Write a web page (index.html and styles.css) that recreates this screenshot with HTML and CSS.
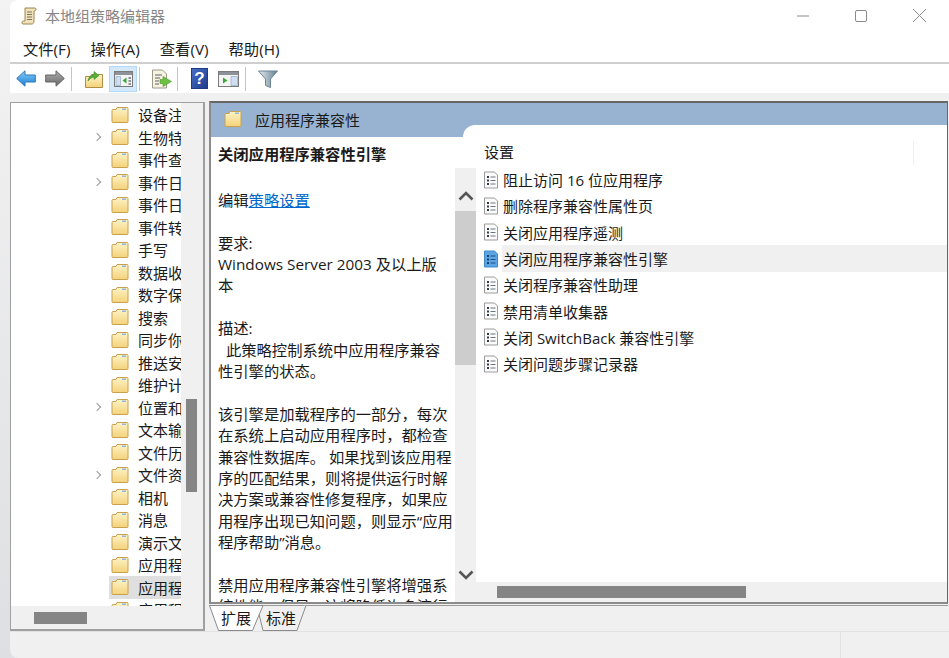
FILE: index.html
```html
<!DOCTYPE html>
<html lang="zh-CN">
<head>
  <meta charset="UTF-8" />
  <title>本地组策略编辑器</title>
  <link rel="stylesheet" href="styles.css">
</head>
<body>
  <svg class="defs" width="0" height="0">
    <defs>
      <linearGradient id="fold" x1="0" y1="0" x2="0" y2="1">
        <stop offset="0" stop-color="#fdf4c8"/>
        <stop offset="1" stop-color="#f4d27a"/>
      </linearGradient>
      <linearGradient id="blue" x1="0" y1="0" x2="0" y2="1">
        <stop offset="0" stop-color="#86d0fa"/>
        <stop offset="1" stop-color="#1c7cd2"/>
      </linearGradient>
      <linearGradient id="grey" x1="0" y1="0" x2="0" y2="1">
        <stop offset="0" stop-color="#b0b0b0"/>
        <stop offset="1" stop-color="#666"/>
      </linearGradient>
      <linearGradient id="funnel" x1="0" y1="0" x2="1" y2="0">
        <stop offset="0" stop-color="#e6ecef"/>
        <stop offset="1" stop-color="#5f8092"/>
      </linearGradient>
      <linearGradient id="helpbg" x1="0" y1="0" x2="1" y2="1">
        <stop offset="0" stop-color="#4a70c8"/>
        <stop offset="1" stop-color="#1d3a8c"/>
      </linearGradient>
      <symbol id="folder" viewBox="0 0 18 18">
        <path d="M1 4.500q0-1 1-1h3l1-2h10q1 0 1 1v13q0 1-1 1H2q-1 0-1-1z" fill="url(#fold)" stroke="#c8a04e"/>
        <path d="M11 2.500h4v1.500h-4z" fill="#8fb6e0"/>
      </symbol>
      <symbol id="doc" viewBox="0 0 16 18">
        <path d="M1.500 1h10l3 3v13h-13z" fill="#fbfbfb" stroke="#9a9a9a"/>
        <path d="M4 5h2v2H4zM4 8.500h2v2H4zM4 12h2v2H4z" fill="#2f3b4a"/>
        <path d="M7.500 6h5M7.500 9.500h5M7.500 13h5" stroke="#6a7480"/>
      </symbol>
      <symbol id="doc-sel" viewBox="0 0 16 18">
        <path d="M1.500 1h10l3 3v13h-13z" fill="#5ba6e2" stroke="#3f88cc"/>
        <path d="M4 5h2v2H4zM4 8.500h2v2H4zM4 12h2v2H4z" fill="#17406e"/>
        <path d="M7.500 6h5M7.500 9.500h5M7.500 13h5" stroke="#1f4f85"/>
      </symbol>
    </defs>
  </svg>

  <div class="window">
    <header class="titlebar">
      <svg class="app-icon" width="16" height="18" viewBox="0 0 16 18">
        <path d="M4 1h10c1.500 0 1.500 3-.5 3H13v10c0 2-1 3-2.500 3H2c-1.500 0-1.500-3 .5-3H4z" fill="#efe2ba" stroke="#9c8650"/>
        <path d="M6 5h5M6 7.500h5M6 10h5M6 12.500h5" stroke="#7c755e"/>
      </svg>
      <span class="title">本地组策略编辑器</span>
      <div class="win-buttons">
        <svg width="12" height="12" viewBox="0 0 12 12"><path d="M0 6h12" stroke="#8a8a8a"/></svg>
        <svg width="12" height="12" viewBox="0 0 12 12"><rect x=".5" y=".5" width="11" height="11" rx="1.500" fill="none" stroke="#8a8a8a"/></svg>
        <svg width="13" height="13" viewBox="0 0 13 13"><path d="M0 0l13 13M13 0L0 13" stroke="#8a8a8a"/></svg>
      </div>
    </header>

    <nav class="menubar">
      <span>文件(F)</span>
      <span>操作(A)</span>
      <span>查看(V)</span>
      <span>帮助(H)</span>
    </nav>

    <div class="toolbar">
      <div class="tool-group nav-group">
        <svg width="20" height="17" viewBox="0 0 20 17">
          <path d="M.7 8.500L9 .8v4.200h10.300v7H9v4.200z" fill="url(#blue)" stroke="#2a78bc" stroke-linejoin="round"/>
        </svg>
        <svg width="20" height="17" viewBox="0 0 20 17">
          <path d="M19.300 8.500L11 .8v4.200H.7v7H11v4.200z" fill="url(#grey)" stroke="#666" stroke-linejoin="round"/>
        </svg>
      </div>
      <i class="sep"></i>
      <div class="tool-group view-group">
        <svg width="18" height="18" viewBox="0 0 18 18">
          <path d="M.5 6.500h5l1-2h11v13H.5z" fill="url(#fold)" stroke="#b08e45"/>
          <path d="M3 11c.5-4 3-6 6-6.500V1.500l5 4-5 4V7c-2.500.5-4.500 2-6 4z" fill="#58b03c" stroke="#3c8a26" stroke-width=".6"/>
        </svg>
        <span class="tool-on">
          <svg width="19" height="16" viewBox="0 0 19 16">
            <rect x=".5" y=".5" width="18" height="15" fill="#f4f4f4" stroke="#7a7a7a"/>
            <path d="M1 1h17v3H1z" fill="#8d9298"/>
            <path d="M2 5.500h4.500v9H2z" fill="#cfe0f2" stroke="#8aa0b8" stroke-width=".6"/>
            <path d="M12.500 6.500v6l-4-3z" fill="#3aa83a"/>
            <path d="M14.500 6h2.500v2h-2.500zM14.500 9h2.500v2h-2.500zM14.500 12h2.500v2h-2.500z" fill="#8d9298"/>
          </svg>
        </span>
      </div>
      <i class="sep sep-near"></i>
      <svg width="21" height="20" viewBox="0 0 21 20">
        <path d="M1.500 1h10l4 4v14h-14z" fill="#f7f3df" stroke="#9a9a8a"/>
        <path d="M4 6h7M4 9h5M4 12h4M4 15h4" stroke="#5a6070"/>
        <path d="M12 7.500v3H9v4h3v3l8.500-5z" fill="#6cc044" stroke="#4b9a2c" stroke-width=".6"/>
      </svg>
      <i class="sep sep-export"></i>
      <div class="tool-group help-group">
        <svg width="17" height="21" viewBox="0 0 17 21">
          <rect x=".5" y=".5" width="16" height="20" fill="url(#helpbg)" stroke="#1f3a80"/>
          <text x="8.500" y="16" text-anchor="middle" class="help-mark">?</text>
        </svg>
        <svg width="21" height="16" viewBox="0 0 21 16">
          <rect x=".5" y=".5" width="20" height="15" fill="#f4f4f4" stroke="#7a7a7a"/>
          <path d="M1 1h19v3H1z" fill="#8d9298"/>
          <path d="M5 6.500v6l4.500-3z" fill="#3aa83a"/>
          <path d="M13 5.500h6.500v9H13z" fill="#cfe0f2" stroke="#8aa0b8" stroke-width=".6"/>
        </svg>
      </div>
      <i class="sep"></i>
      <svg class="filter" width="20" height="18" viewBox="0 0 20 18">
        <path d="M.5 1h19l-7 8v8.500l-5-2V9z" fill="url(#funnel)" stroke="#6b8494"/>
      </svg>
    </div>

    <main class="panes">
      <aside class="tree-pane">
        <div class="tree-top">
          <div class="tree">
            <div class="node"><svg><use href="#folder"/></svg>设备注</div>
            <div class="node more"><svg><use href="#folder"/></svg>生物特</div>
            <div class="node"><svg><use href="#folder"/></svg>事件查</div>
            <div class="node more"><svg><use href="#folder"/></svg>事件日</div>
            <div class="node"><svg><use href="#folder"/></svg>事件日</div>
            <div class="node"><svg><use href="#folder"/></svg>事件转</div>
            <div class="node"><svg><use href="#folder"/></svg>手写</div>
            <div class="node"><svg><use href="#folder"/></svg>数据收</div>
            <div class="node"><svg><use href="#folder"/></svg>数字保</div>
            <div class="node"><svg><use href="#folder"/></svg>搜索</div>
            <div class="node"><svg><use href="#folder"/></svg>同步你</div>
            <div class="node"><svg><use href="#folder"/></svg>推送安</div>
            <div class="node"><svg><use href="#folder"/></svg>维护计</div>
            <div class="node more"><svg><use href="#folder"/></svg>位置和</div>
            <div class="node"><svg><use href="#folder"/></svg>文本输</div>
            <div class="node"><svg><use href="#folder"/></svg>文件历</div>
            <div class="node more"><svg><use href="#folder"/></svg>文件资</div>
            <div class="node"><svg><use href="#folder"/></svg>相机</div>
            <div class="node"><svg><use href="#folder"/></svg>消息</div>
            <div class="node"><svg><use href="#folder"/></svg>演示文</div>
            <div class="node"><svg><use href="#folder"/></svg>应用程</div>
            <div class="node selected"><svg><use href="#folder"/></svg>应用程</div>
            <div class="node"><svg><use href="#folder"/></svg>应用程</div>
          </div>
          <div class="tree-vscroll"><div class="thumb"></div></div>
        </div>
        <div class="hscroll tree-hscroll"><div class="thumb"></div></div>
      </aside>

      <section class="detail">
        <div class="detail-box">
          <div class="detail-head">
            <svg><use href="#folder"/></svg>
            <span>应用程序兼容性</span>
          </div>
          <div class="detail-body">
            <div class="desc-text">
              <p class="desc-title">关闭应用程序兼容性引擎</p>
              <p>编辑<a href="#">策略设置</a></p>
              <p>要求:<br>Windows Server 2003 及以上版<br>本</p>
              <p>描述:<br>&nbsp;&nbsp;此策略控制系统中应用程序兼容性引擎的状态。</p>
              <p>该引擎是加载程序的一部分，每次在系统上启动应用程序时，都检查兼容性数据库。 如果找到该应用程序的匹配结果，则将提供运行时解决方案或兼容性修复程序，如果应用程序出现已知问题，则显示“应用程序帮助”消息。</p>
              <p>禁用应用程序兼容性引擎将增强系统性能。但是，这将降低许多流行</p>
            </div>
            <div class="desc-vscroll">
              <svg width="16" height="10" viewBox="0 0 16 10"><path d="M1.500 8.500L8 2l6.500 6.500" fill="none" stroke="#555" stroke-width="2.600"/></svg>
              <div class="track"><div class="thumb"></div></div>
              <svg width="16" height="10" viewBox="0 0 16 10"><path d="M1.500 1.500L8 8l6.500-6.500" fill="none" stroke="#555" stroke-width="2.600"/></svg>
            </div>
            <div class="settings">
              <div class="settings-head"><span>设置</span></div>
              <ul class="rows">
                <li><svg><use href="#doc"/></svg><span>阻止访问 16 位应用程序</span></li>
                <li><svg><use href="#doc"/></svg><span>删除程序兼容性属性页</span></li>
                <li><svg><use href="#doc"/></svg><span>关闭应用程序遥测</span></li>
                <li class="current"><svg><use href="#doc-sel"/></svg><span>关闭应用程序兼容性引擎</span></li>
                <li><svg><use href="#doc"/></svg><span>关闭程序兼容性助理</span></li>
                <li><svg><use href="#doc"/></svg><span>禁用清单收集器</span></li>
                <li><svg><use href="#doc"/></svg><span>关闭 SwitchBack 兼容性引擎</span></li>
                <li><svg><use href="#doc"/></svg><span>关闭问题步骤记录器</span></li>
              </ul>
              <div class="hscroll settings-hscroll"><div class="thumb"></div></div>
            </div>
          </div>
        </div>
        <div class="tabs">
          <svg class="tab-shapes" width="110" height="27" viewBox="0 0 110 27">
            <path d="M50 9l4 16.500h34L97 .5" fill="#f0f0f0" stroke="#8a8a8a"/>
            <path d="M.5 .5l9 25h34L54 .5z" fill="#fff" stroke="#8a8a8a"/>
          </svg>
          <span class="tab">扩展</span>
          <span class="tab">标准</span>
        </div>
      </section>
    </main>

    <footer class="statusbar">
      <div></div>
      <div class="status-end"></div>
    </footer>
  </div>
</body>
</html>
```

FILE: styles.css
```css
* {
  box-sizing: border-box;
}

html, body {
  margin: 0;
  height: 100%;
  overflow: hidden;
}

body {
  background: linear-gradient(#f3f3f3, #dedfe2);
  font-family: "Open Sans", "Noto Sans CJK SC", sans-serif;
  font-size: 15px;
  color: #1a1a1a;
}

.defs {
  position: absolute;
}

.window {
  height: 658px;
  margin-left: 10px;
  display: flex;
  flex-direction: column;
  background: #f0f0f0;
  border-radius: 8px 0 0 8px;
  overflow: hidden;
}

/* title + menu */
.titlebar {
  height: 34px;
  flex: none;
  display: flex;
  align-items: center;
  padding: 0 0 3px 11px;
  background: #fff;
}

.app-icon {
  margin-right: 8px;
}

.title {
  color: #868686;
}

.win-buttons {
  margin-left: auto;
  display: flex;
  align-items: center;
  gap: 46px;
  padding-right: 23px;
}

.menubar {
  height: 30px;
  flex: none;
  display: flex;
  gap: 20px;
  padding-left: 13px;
  align-items: center;
  font-size: 15.300px;
  background: #fff;
  border-bottom: 2px solid #cfcfcf;
}

/* toolbar */
.toolbar {
  height: 29px;
  flex: none;
  display: flex;
  align-items: center;
  padding-left: 6px;
  background: #fff;
}

.tool-group {
  display: flex;
  align-items: center;
}

.nav-group {
  gap: 9px;
}

.view-group {
  gap: 6px;
}

.help-group {
  gap: 10px;
}

.sep {
  width: 1px;
  height: 24px;
  background: #c4c4c4;
  margin: 0 13px 0 6px;
}

.sep-near {
  margin: 0 11px 0 2px;
}

.sep-export {
  margin-left: 5px;
}

.filter {
  margin-left: -1px;
}

.tool-on {
  width: 28px;
  height: 26px;
  display: flex;
  align-items: center;
  justify-content: center;
  background: #d3e8fb;
  border: 1px solid #b4d8f6;
}

.help-mark {
  font-family: "Liberation Sans", sans-serif;
  font-size: 17px;
  font-weight: bold;
  fill: #fff;
}

/* panes */
.panes {
  flex: 1;
  min-height: 0;
  display: flex;
  gap: 4px;
  padding: 8px 1px 0 0;
}

.tree-pane {
  width: 195px;
  flex: none;
  display: flex;
  flex-direction: column;
  border: solid #a0a0a0;
  border-width: 1px 2px 2px 1px;
  background: #f0f0f0;
  margin-top: 1px;
}

.tree-top {
  flex: 1;
  min-height: 0;
  display: flex;
}

.tree {
  width: 171px;
  overflow: hidden;
  background: #fff;
  padding-top: .5px;
}

.node {
  height: 22.500px;
  display: flex;
  align-items: center;
  padding-left: 100px;
  position: relative;
  white-space: nowrap;
}

.node svg {
  width: 18px;
  height: 18px;
  margin-right: 9px;
  flex: none;
}

.node.more::before {
  content: "";
  position: absolute;
  left: 83px;
  top: 8px;
  width: 5px;
  height: 5px;
  border: solid #9a9a9a;
  border-width: 1px 1px 0 0;
  transform: rotate(45deg);
}

.node.selected {
  background: linear-gradient(90deg, #fff 98px, #dfdfdf 98px);
}

.thumb {
  background: #858585;
}

.tree-vscroll {
  width: 22px;
  flex: none;
  padding: 296px 6px 0 5px;
  background: #f0f0f0;
}

.tree-vscroll .thumb {
  height: 93px;
}

.hscroll {
  flex: none;
  background: #f0f0f0;
}

.hscroll .thumb {
  height: 12px;
}

.tree-hscroll {
  height: 23px;
  padding: 6px 0 0 23px;
}

.tree-hscroll .thumb {
  width: 53px;
}

/* right side */
.detail {
  flex: 1;
  min-width: 0;
  display: flex;
  flex-direction: column;
}

.detail-box {
  height: 503px;
  flex: none;
  display: flex;
  flex-direction: column;
  border: solid #8c8c8c;
  border-width: 2px 1px 2px 2px;
  border-top-color: #666;
  border-right-color: #666;
  background: #fff;
}

.detail-head {
  height: 34px;
  flex: none;
  display: flex;
  align-items: flex-start;
  padding: 5px 0 0 13px;
  gap: 13px;
  background: #98b3d1;
  line-height: 24px;
}

.detail-head svg {
  width: 18px;
  height: 18px;
  margin-top: 2px;
}

.detail-body {
  flex: 1;
  min-height: 0;
  display: flex;
}

.desc-text {
  width: 244px;
  flex: none;
  padding: 7px 1px 0 7px;
  font-size: 15.300px;
  line-height: 21.400px;
  overflow: hidden;
}

.desc-text p {
  margin: 0 0 21.400px;
}

.desc-text .desc-title {
  font-weight: 700;
  margin-bottom: 24.400px;
}

.desc-text a {
  color: #0066cc;
}

/* sits over the left edge of the settings sheet */
.desc-vscroll {
  width: 21px;
  flex: none;
  margin-top: 31px;
  display: flex;
  flex-direction: column;
  align-items: center;
  padding: 23px 0 22px;
  background: #f0f0f0;
  position: relative;
  z-index: 2;
}

.track {
  flex: 1;
  width: 100%;
  padding-top: 10px;
}

.track .thumb {
  height: 154px;
  background: #cdcdcd;
}

/* settings list */
.settings {
  flex: 1;
  min-width: 0;
  margin: -12px 0 0 -13px;
  position: relative;
  z-index: 1;
  background: #fff;
  border-radius: 12px 0 0 0;
  display: flex;
  flex-direction: column;
}

.settings-head {
  height: 40px;
  flex: none;
  padding: 16px 0 0 21px;
  line-height: 22px;
}

.settings-head span {
  display: block;
  width: 430px;
  height: 24px;
  border-right: 1px solid #efefef;
}

.rows {
  list-style: none;
  margin: 0;
  padding: 1.500px 0 0 20px;
  flex: 1;
}

.rows li {
  height: 26.300px;
  display: flex;
  align-items: center;
}

.rows svg {
  width: 16px;
  height: 18px;
  margin-right: 3px;
  flex: none;
}

.rows span {
  flex: 1;
  height: 100%;
  display: flex;
  align-items: center;
  padding-left: 1px;
  white-space: pre;
}

.rows .current span {
  background: #f0f0f0;
}

.settings-hscroll {
  height: 20px;
  margin-left: 13px;
  padding: 4px 0 0 21px;
}

.settings-hscroll .thumb {
  width: 249px;
}

/* tabs */
.tabs {
  height: 26px;
  flex: none;
  margin-top: 1px;
  border-top: 1px solid #9a9a9a;
  display: flex;
  gap: 15px;
  padding-left: 12px;
  line-height: 24px;
  position: relative;
}

.tab-shapes {
  position: absolute;
  left: 0;
  top: -1px;
}

.tab {
  position: relative;
  width: 30px;
}

/* status */
.statusbar {
  height: 27px;
  flex: none;
  display: flex;
  justify-content: space-between;
  border-top: 1px solid #e2e2e2;
}

.status-end {
  width: 109px;
  border-left: 1px solid #e2e2e2;
}
```
